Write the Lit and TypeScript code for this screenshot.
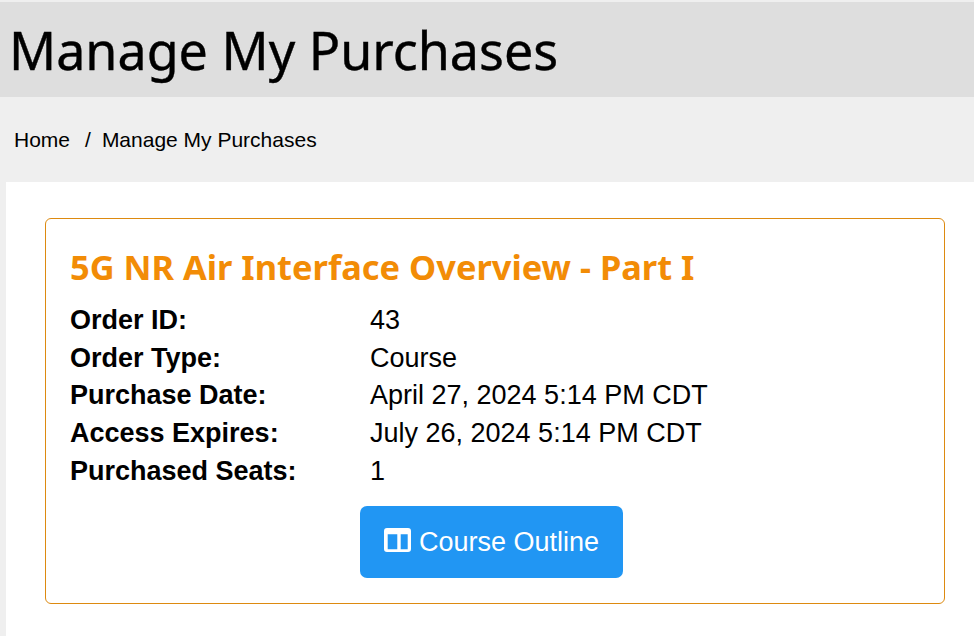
import { LitElement, html, css } from "lit";
import { customElement } from "lit/decorators.js";

const rows: [string, string][] = [
  ["Order ID:", "43"],
  ["Order Type:", "Course"],
  ["Purchase Date:", "April 27, 2024 5:14 PM CDT"],
  ["Access Expires:", "July 26, 2024 5:14 PM CDT"],
  ["Purchased Seats:", "1"],
];

@customElement("app-root")
export class AppRoot extends LitElement {
  static styles = css`
    :host { display: block; height: 636px; overflow: hidden; background: #efefef; padding-top: 2px; box-sizing: border-box; font-family: "Liberation Sans", Arial, sans-serif; color: #000; }
    .head { height: 95px; background: #dedede; display: flex; align-items: center; padding-left: 9px; }
    h1 { margin: 0; font: 400 52px/1 "Noto Sans", sans-serif; -webkit-text-stroke: 0.4px #000; }
    .crumbs { height: 85px; display: flex; align-items: center; padding-left: 14px; font-size: 21px; }
    .sep { padding: 0 11px 0 15px; }
    .main { margin-left: 6px; background: #fff; padding: 36px 29px 32px 39px; height: 454px; box-sizing: border-box; }
    .card { border: 1px solid #dd8a10; border-radius: 6px; height: 386px; box-sizing: border-box; padding: 24px 24px 0; }
    h2 { margin: 0 0 11px; font: 700 34.400px/48px "Noto Sans", sans-serif; color: #f28c06; }
    .row { display: grid; grid-template-columns: 300px 1fr; font-size: 27px; line-height: 37.7px; }
    .label { font-weight: 700; }
    .actions { display: flex; justify-content: center; margin-top: 15px; padding-right: 7px; }
    .btn { display: flex; align-items: center; gap: 8px; height: 72px; width: 263px; box-sizing: border-box; justify-content: center; background: #2196f3; color: #fff; border-radius: 7px; font-size: 27px; }
    .btn span { padding-top: 1px; }
    svg { width: 27px; height: 24px; fill: #fff; margin-bottom: 4px; }
  `;
  render() {
    return html`
      <div class="head"><h1>Manage My Purchases</h1></div>
      <div class="crumbs"><span>Home</span><span class="sep">/</span><span>Manage My Purchases</span></div>
      <div class="main">
        <div class="card">
          <h2>5G NR Air Interface Overview - Part I</h2>
          ${rows.map(([a, b]) => html`<div class="row"><span class="label">${a}</span><span>${b}</span></div>`)}
          <div class="actions">
            <div class="btn">
              <svg viewBox="0 0 27 24"><path fill-rule="evenodd" d="M3 0h21a3 3 0 0 1 3 3v18a3 3 0 0 1-3 3H3a3 3 0 0 1-3-3V3a3 3 0 0 1 3-3zM3.700 6.300v15h9.600v-15zM16.700 6.300v15h7v-15z"/></svg>
              <span>Course Outline</span>
            </div>
          </div>
        </div>
      </div>
    `;
  }
}
